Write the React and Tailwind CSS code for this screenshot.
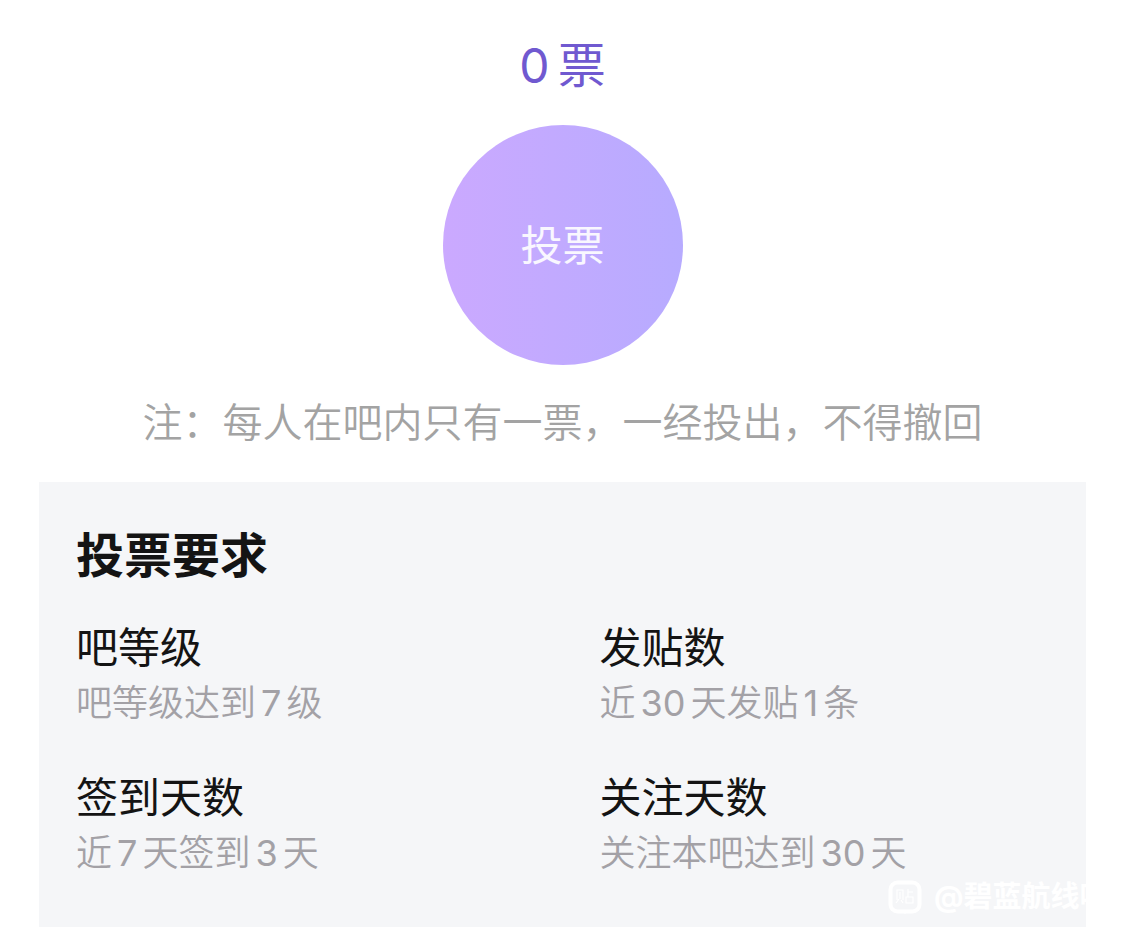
const requirements = [
  { title: "吧等级", detail: ["吧等级达到", 7, "级"] },
  { title: "发贴数", detail: ["近", 30, "天发贴", 1, "条"] },
  { title: "签到天数", detail: ["近", 7, "天签到", 3, "天"] },
  { title: "关注天数", detail: ["关注本吧达到", 30, "天"] },
];

function Detail({ parts }) {
  return (
    <p className="text-[36px] leading-[50px] font-[350] text-[#a3a1a6]">
      {parts.map((part, i) =>
        typeof part === "number" ? (
          <span key={i} className="mx-[5px] font-normal">{part}</span>
        ) : (
          part
        ),
      )}
    </p>
  );
}

function Watermark() {
  return (
    <div className="absolute right-0 bottom-3 flex w-[237px] items-center gap-3 overflow-hidden whitespace-nowrap text-[29px] leading-9 font-bold text-white">
      <svg viewBox="0 0 34 34" className="size-[34px] shrink-0" fill="none" stroke="currentColor" aria-hidden="true">
        <rect x="2.5" y="2.5" width="29" height="29" rx="7" strokeWidth="4" />
        <path d="M9 20V10h6v10M12 12v7M11 19l-3 4M13 20l2 3M20 9v8M20 12h5M18 17h7v6h-7z" strokeWidth="1.2" />
        <path d="M14 31l3 3 3-3z" fill="currentColor" stroke="none" />
      </svg>
      <span>@碧蓝航线吧</span>
    </div>
  );
}

export default function App() {
  return (
    <main lang="zh-CN" className="flex min-h-screen flex-col bg-white font-['Inter','Noto_Sans_CJK_SC',sans-serif]">
      <p className="mt-9 text-center text-[48px] leading-[60px] text-[#7059d0]">
        <span className="mr-2">0</span>票
      </p>
      <button type="button" className="mx-auto mt-[29px] size-60 rounded-full bg-linear-to-r from-[#cba9ff] to-[#b7abff] text-[42px] text-white/90">
        投票
      </button>
      <p className="mt-7 text-center text-[40px] leading-[60px] font-[350] text-[#a3a3a3]">注：每人在吧内只有一票，一经投出，不得撤回</p>
      <section className="relative mt-[29px] flex grow flex-col px-[39px]">
        <div className="grow bg-[#f5f6f8] px-[37px] pt-11 pb-12">
          <h1 className="text-[48px] leading-[60px] font-bold text-[#141414]">投票要求</h1>
          <div className="mt-8 grid grid-cols-2 gap-x-[74px] gap-y-10">
            {requirements.map(({ title, detail }) => (
              <div key={title}>
                <h2 className="text-[42px] leading-[60px] text-[#141414]">{title}</h2>
                <Detail parts={detail} />
              </div>
            ))}
          </div>
        </div>
        <Watermark />
      </section>
    </main>
  );
}
